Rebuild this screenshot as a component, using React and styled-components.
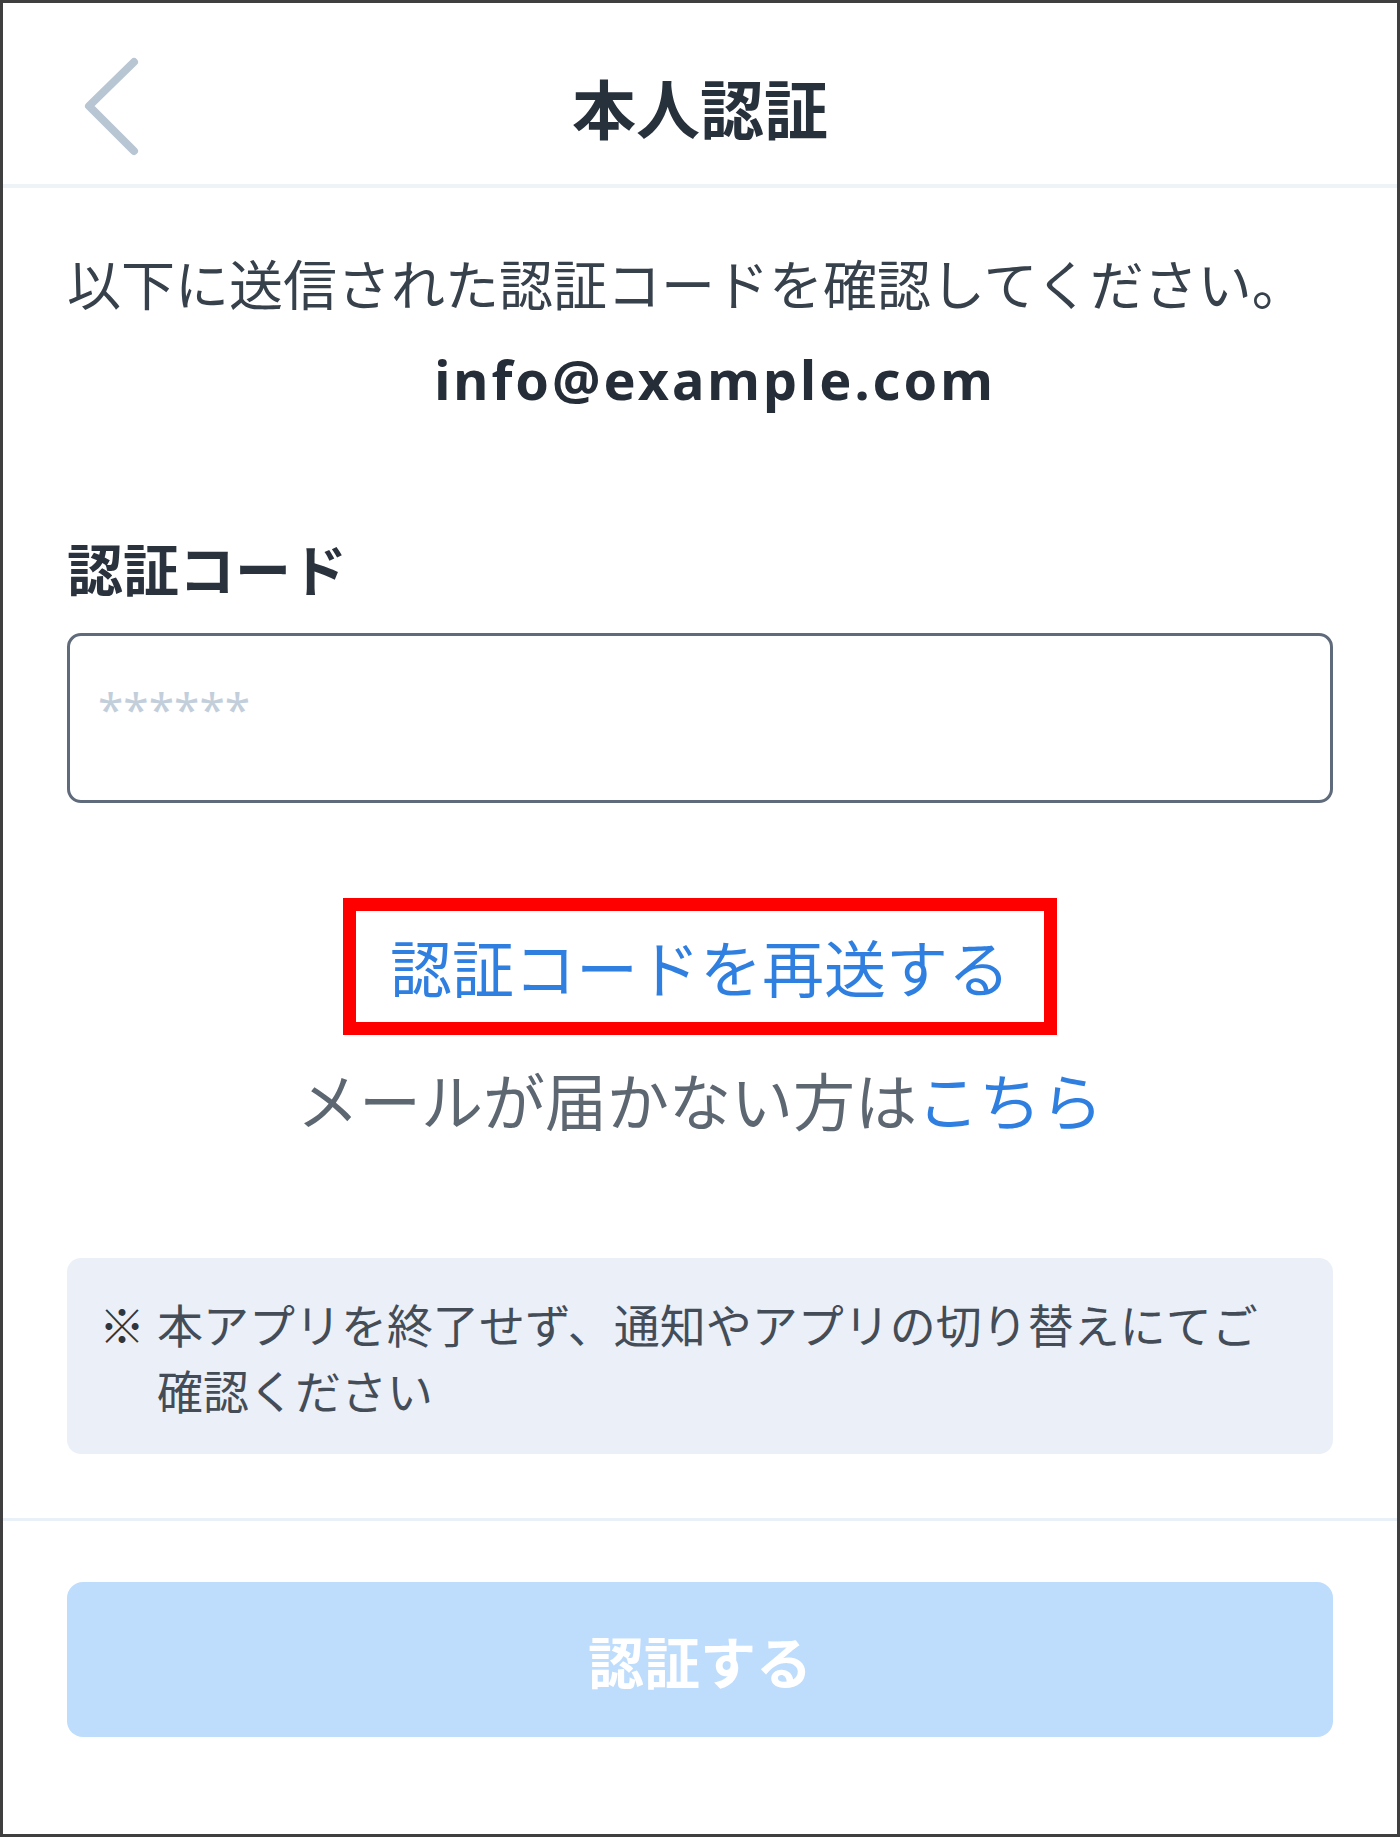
import React from "react";
import styled, { createGlobalStyle } from "styled-components";

const GlobalStyle = createGlobalStyle`
  * { box-sizing: border-box; }
  body {
    margin: 0;
    background: #fff;
    font-family: "Noto Sans CJK JP", "Noto Sans", sans-serif;
  }
`;

export default () => {
  return (
    <>
      <GlobalStyle />
      <Frame>
        <Header>
          <BackButton aria-label="戻る">
            <svg width="60" height="104" viewBox="0 0 60 104" fill="none">
              <path
                d="M52 7 L7 51 L52 96"
                stroke="#b8c5d3"
                strokeWidth="8"
                strokeLinecap="round"
                strokeLinejoin="round"
              />
            </svg>
          </BackButton>
          <Title>本人認証</Title>
          <span />
        </Header>

        <Main>
          <Lead>以下に送信された認証コードを確認してください。</Lead>
          <Email>info@example.com</Email>

          <Label htmlFor="code">認証コード</Label>
          <CodeInput id="code" placeholder="******" />

          <Resend>認証コードを再送する</Resend>
          <Help>
            メールが届かない方は<Link>こちら</Link>
          </Help>

          <Note>
            <Mark>※</Mark>
            <span>本アプリを終了せず、通知やアプリの切り替えにてご確認ください</span>
          </Note>
        </Main>

        <Footer>
          <SubmitButton disabled>認証する</SubmitButton>
        </Footer>
      </Frame>
    </>
  );
};

const Frame = styled.div`
  width: 1400px;
  height: 1837px;
  border: 3px solid #3f3f3f;
  background: #fff;
  display: flex;
  flex-direction: column;
`;

const Header = styled.header`
  height: 185px;
  padding-top: 26px;
  border-bottom: 4px solid #eef3f8;
  display: grid;
  grid-template-columns: 1fr auto 1fr;
  align-items: center;
`;

const BackButton = styled.span`
  display: flex;
  align-items: center;
  padding-left: 79px;
`;

const Title = styled.h1`
  margin: 0;
  font-size: 64px;
  font-weight: 700;
  line-height: 1.4;
  color: #27313c;
`;

const Main = styled.main`
  padding: 54px 64px 64px;
  display: flex;
  flex-direction: column;
`;

const Lead = styled.p`
  margin: 0;
  font-size: 54px;
  line-height: 81px;
  color: #37414c;
  white-space: nowrap;
`;

const Email = styled.p`
  margin: 16px 0 0;
  padding-left: 30px;
  font-family: "Noto Sans", sans-serif;
  font-size: 54px;
  font-weight: 700;
  letter-spacing: 3px;
  line-height: 81px;
  text-align: center;
  color: #252e38;
`;

const Label = styled.label`
  margin-top: 105px;
  font-size: 56px;
  font-weight: 700;
  line-height: 84px;
  color: #2a333d;
`;

const CodeInput = styled.input`
  margin-top: 24px;
  height: 170px;
  width: 100%;
  border: 3px solid #5f6b7a;
  border-radius: 14px;
  padding: 0 28px 18px;
  font-family: "Noto Sans", sans-serif;
  font-size: 46px;
  color: #252e38;
  outline: none;

  &::placeholder {
    color: #c3cedb;
  }
`;

const Resend = styled.div`
  align-self: center;
  margin-top: 95px;
  border: 13px solid #ff0000;
  padding: 9px 34px;
  font-size: 62px;
  line-height: 93px;
  color: #2f7fe0;
`;

const Help = styled.p`
  margin: 18px 0 0;
  font-size: 62px;
  line-height: 92px;
  text-align: center;
  color: #5d6772;
`;

const Link = styled.span`
  color: #2f7fe0;
`;

const Note = styled.div`
  margin-top: 113px;
  background: #ebf0f8;
  border-radius: 14px;
  padding: 32px;
  display: flex;
  gap: 12px;
  font-size: 46px;
  line-height: 66px;
  color: #444d57;
`;

const Mark = styled.span`
  flex: none;
  font-weight: 900;
  color: #2e3740;
`;

const Footer = styled.footer`
  border-top: 3px solid #e9f0f7;
  padding: 61px 64px 0;
`;

const SubmitButton = styled.button`
  width: 100%;
  height: 155px;
  border: none;
  border-radius: 16px;
  background: #bedcfc;
  color: #fff;
  font-family: "Noto Sans CJK JP", sans-serif;
  font-size: 56px;
  font-weight: 700;
`;
